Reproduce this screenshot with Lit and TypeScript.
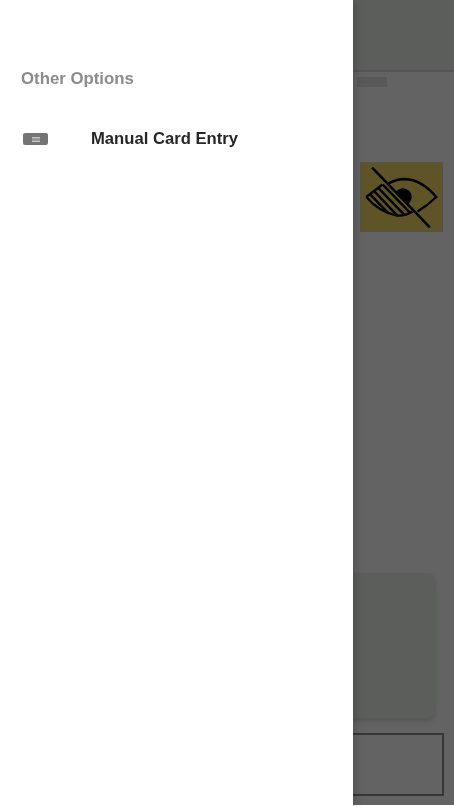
import { LitElement, html, css } from "lit";
import { customElement } from "lit/decorators.js";

@customElement("app-root")
export class AppRoot extends LitElement {
  static styles = css`
    :host { display: block; width: 454px; height: 807px; position: relative; overflow: hidden; background: #fff; font-family: "Liberation Sans", Arial, sans-serif; }
    .page { height: 805px; background: #626362; display: flex; flex-direction: column; }
    .header { height: 70px; flex: none; background: #5c5e5c; border-bottom: 2px solid #545654; }
    .chip { width: 30px; height: 10px; margin: 5px 0 0 357px; background: #585958; flex: none; }
    .eye { width: 83px; height: 70px; margin: 75px 0 0 360px; flex: none; background: #5f5427; border: 1px solid #535449; box-sizing: border-box; display: block; filter: blur(.4px); }
    .card { width: 435px; height: 145px; margin: 341px 0 0 0; flex: none; background: #5c5e5c; border-radius: 8px; box-shadow: 0 3px 4px #565756; }
    .outlined { width: 444px; height: 63px; margin: 15px 0 0 0; flex: none; box-sizing: border-box; border: 2px solid #363736; }
    .drawer { position: absolute; left: 0; top: 0; width: 353px; height: 807px; background: #fff; box-shadow: 2px 0 10px rgba(0,0,0,.2); }
    .title { position: absolute; left: 21px; top: 69px; font-size: 16.8px; line-height: 19px; font-weight: 700; color: #8c8c8c; filter: blur(.5px); white-space: nowrap; }
    .row { position: absolute; left: 23px; top: 130px; display: flex; align-items: center; height: 18px; filter: blur(.5px); }
    .card-icon { width: 25px; height: 12px; border-radius: 2px; background: #747474; display: flex; align-items: center; justify-content: center; }
    .card-icon i { width: 8px; height: 5px; background: linear-gradient(#c8c8c8 1px, #999 1px, #999 4px, #c8c8c8 4px); }
    .label { margin-left: 43px; font-size: 16.65px; font-weight: 700; color: #262626; white-space: nowrap; }
  `;

  render() {
    return html`
      <div class="page">
        <div class="header"></div>
        <div class="chip"></div>
        <svg class="eye" viewBox="0 0 83 70">
          <defs>
            <clipPath id="hatch"><path d="M5.3 35 L22 22 L28 21 L55 50 Q45 55 36 54 Q18 50 5.3 35Z" /></clipPath>
          </defs>
          <circle cx="43" cy="35" r="9" fill="#000" />
          <path d="M5.3 35 L28 21 L55 50 Q45 55 36 54Z" fill="#5f5427" />
          <path d="M28 21 Q37 16.5 45 16.5 Q62 17 77.3 35 Q68 44 58 50 M5.3 35 L22 22 M5.3 35 Q18 50 36 54 Q45 55 53 50" fill="none" stroke="#000" stroke-width="2.4" />
          <g clip-path="url(#hatch)" stroke="#000" stroke-width="2.5" fill="none">
            <path d="M22 22 L52 53 M17.3 25.3 L46 55 M13 28.7 L40 57 M9 32 L34 58" />
          </g>
          <path d="M11.3 4.7 L70.7 66.3" stroke="#000" stroke-width="2.6" />
        </svg>
        <div class="card"></div>
        <div class="outlined"></div>
      </div>
      <aside class="drawer">
        <div class="title">Other Options</div>
        <div class="row"><span class="card-icon"><i></i></span><span class="label">Manual Card Entry</span></div>
      </aside>
    `;
  }
}
